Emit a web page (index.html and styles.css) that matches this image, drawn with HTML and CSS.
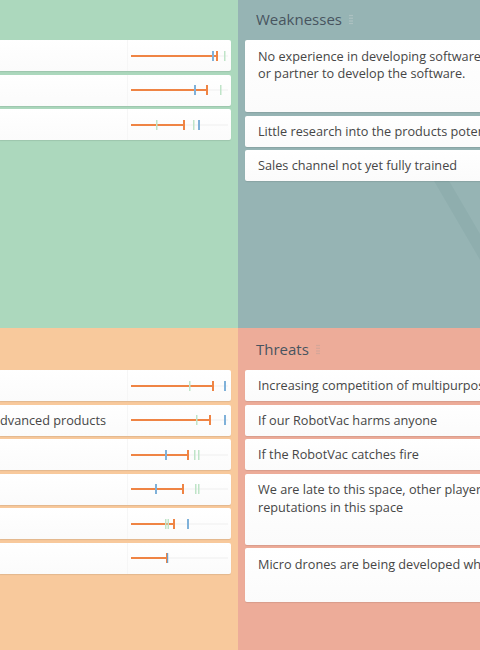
FILE: index.html
```html
<!DOCTYPE html>
<html>
<head>
<meta charset="utf-8">
<link rel="stylesheet" href="styles.css">
</head>
<body>
<div class="board">
  <section class="quad strengths">
    <div class="head"></div>
    <div class="list">
      <div class="card lcard"><div class="txt"></div><div class="bar"><svg width="97" height="14" viewBox="0 0 97 14"><line class="base" x1="0" y1="7" x2="97" y2="7"/><line class="val" x1="0" y1="7" x2="86" y2="7"/><rect class="tb" x="81" y="2" width="2" height="10"/><rect class="tg" x="93" y="2" width="1.5" height="10"/><rect class="to" x="85" y="2" width="2" height="10"/></svg></div></div>
      <div class="card lcard"><div class="txt"></div><div class="bar"><svg width="97" height="14" viewBox="0 0 97 14"><line class="base" x1="0" y1="7" x2="97" y2="7"/><line class="val" x1="0" y1="7" x2="76" y2="7"/><rect class="tb" x="63" y="2" width="2" height="10"/><rect class="tg" x="89" y="2" width="1.5" height="10"/><rect class="to" x="75" y="2" width="2" height="10"/></svg></div></div>
      <div class="card lcard"><div class="txt"></div><div class="bar"><svg width="97" height="14" viewBox="0 0 97 14"><line class="base" x1="0" y1="7" x2="97" y2="7"/><line class="val" x1="0" y1="7" x2="53" y2="7"/><rect class="tg" x="25" y="2" width="1.5" height="10"/><rect class="tg" x="62" y="2" width="1.5" height="10"/><rect class="tb" x="67" y="2" width="2" height="10"/><rect class="to" x="52" y="2" width="2" height="10"/></svg></div></div>
    </div>
  </section>

  <section class="quad weaknesses">
    <svg class="mark" width="320" height="340" viewBox="0 0 320 340"><polygon points="178,152 193,152 298,332 283,332"/></svg>
    <div class="head"><h2>Weaknesses</h2><svg class="grip" width="4" height="11" viewBox="0 0 4 11"><circle cx="1" cy="1.5" r=".75"/><circle cx="3" cy="1.5" r=".75"/><circle cx="1" cy="4.2" r=".75"/><circle cx="3" cy="4.2" r=".75"/><circle cx="1" cy="6.9" r=".75"/><circle cx="3" cy="6.9" r=".75"/><circle cx="1" cy="9.6" r=".75"/><circle cx="3" cy="9.6" r=".75"/></svg></div>
    <div class="list">
      <div class="card rcard tall">No experience in developing software, will need to hire<br>or partner to develop the software.</div>
      <div class="card rcard">Little research into the products potential market</div>
      <div class="card rcard">Sales channel not yet fully trained</div>
    </div>
  </section>

  <section class="quad opportunities">
    <div class="head"></div>
    <div class="list">
      <div class="card lcard"><div class="txt"></div><div class="bar"><svg width="97" height="14" viewBox="0 0 97 14"><line class="base" x1="0" y1="7" x2="97" y2="7"/><line class="val" x1="0" y1="7" x2="82" y2="7"/><rect class="tg" x="58" y="2" width="1.5" height="10"/><rect class="tb" x="93" y="2" width="2" height="10"/><rect class="to" x="81" y="2" width="2" height="10"/></svg></div></div>
      <div class="card lcard"><div class="txt"><span>Consumers are looking for more advanced products</span></div><div class="bar"><svg width="97" height="14" viewBox="0 0 97 14"><line class="base" x1="0" y1="7" x2="97" y2="7"/><line class="val" x1="0" y1="7" x2="79" y2="7"/><rect class="tg" x="65" y="2" width="1.5" height="10"/><rect class="tb" x="93" y="2" width="2" height="10"/><rect class="to" x="78" y="2" width="2" height="10"/></svg></div></div>
      <div class="card lcard"><div class="txt"></div><div class="bar"><svg width="97" height="14" viewBox="0 0 97 14"><line class="base" x1="0" y1="7" x2="97" y2="7"/><line class="val" x1="0" y1="7" x2="57" y2="7"/><rect class="tb" x="34" y="2" width="2" height="10"/><rect class="tg" x="63" y="2" width="1.5" height="10"/><rect class="tg" x="67" y="2" width="1.5" height="10"/><rect class="to" x="56" y="2" width="2" height="10"/></svg></div></div>
      <div class="card lcard"><div class="txt"></div><div class="bar"><svg width="97" height="14" viewBox="0 0 97 14"><line class="base" x1="0" y1="7" x2="97" y2="7"/><line class="val" x1="0" y1="7" x2="52" y2="7"/><rect class="tb" x="24" y="2" width="2" height="10"/><rect class="tg" x="64" y="2" width="1.5" height="10"/><rect class="tg" x="67" y="2" width="1.5" height="10"/><rect class="to" x="51" y="2" width="2" height="10"/></svg></div></div>
      <div class="card lcard"><div class="txt"></div><div class="bar"><svg width="97" height="14" viewBox="0 0 97 14"><line class="base" x1="0" y1="7" x2="97" y2="7"/><line class="val" x1="0" y1="7" x2="43" y2="7"/><rect class="tg" x="34" y="2" width="1.5" height="10"/><rect class="tg" x="36.5" y="2" width="1.5" height="10"/><rect class="tb" x="56" y="2" width="2" height="10"/><rect class="to" x="42" y="2" width="2" height="10"/></svg></div></div>
      <div class="card lcard"><div class="txt"></div><div class="bar"><svg width="97" height="14" viewBox="0 0 97 14"><line class="base" x1="0" y1="7" x2="97" y2="7"/><line class="val" x1="0" y1="7" x2="36" y2="7"/><rect class="to" x="35" y="2" width="2" height="10"/><rect class="tb2" x="36" y="2" width="1.2" height="10"/></svg></div></div>
    </div>
  </section>

  <section class="quad threats">
    <div class="head"><h2>Threats</h2><svg class="grip" width="4" height="11" viewBox="0 0 4 11"><circle cx="1" cy="1.5" r=".75"/><circle cx="3" cy="1.5" r=".75"/><circle cx="1" cy="4.2" r=".75"/><circle cx="3" cy="4.2" r=".75"/><circle cx="1" cy="6.9" r=".75"/><circle cx="3" cy="6.9" r=".75"/><circle cx="1" cy="9.6" r=".75"/><circle cx="3" cy="9.6" r=".75"/></svg></div>
    <div class="list">
      <div class="card rcard">Increasing competition of multipurpose robots</div>
      <div class="card rcard">If our RobotVac harms anyone</div>
      <div class="card rcard">If the RobotVac catches fire</div>
      <div class="card rcard tall2">We are late to this space, other players have established<br>reputations in this space</div>
      <div class="card rcard mid">Micro drones are being developed which could replace us</div>
    </div>
  </section>
</div>
</body>
</html>
```
FILE: styles.css
```css
html, body {
  margin: 0;
  padding: 0;
  width: 480px;
  height: 650px;
  overflow: hidden;
}
body {
  font-family: "Open Sans", "Noto Sans", sans-serif;
  color: #464646;
}
.board {
  display: grid;
  grid-template-columns: 238px 1fr;
  grid-template-rows: 330px 322px;
  margin-top: -2px;
  width: 480px;
}
.quad {
  position: relative;
  overflow: hidden;
}
.strengths { background: #acd8bd; }
.weaknesses { background: #96b4b4; }
.opportunities { background: #f8c99c; }
.threats { background: #edac99; }

.head {
  height: 42px;
  display: flex;
  align-items: center;
  gap: 7px;
  padding-left: 18px;
  position: relative;
  z-index: 1;
}
.head h2 {
  margin: 0;
  font-size: 15px;
  font-weight: 400;
  line-height: 20px;
  color: #48545f;
}
.grip { fill: #b9c9c9; margin-top: 1px; }
.threats .grip { fill: #c9a398; }

.list {
  display: flex;
  flex-direction: column;
  gap: 3.5px;
  position: relative;
  z-index: 1;
}
.strengths .list, .opportunities .list { padding-right: 7px; }
.weaknesses .list, .threats .list { padding-left: 7px; }

.card {
  background: linear-gradient(#ffffff, #fbfbfb);
  box-shadow: 0 1px 1px rgba(0, 0, 0, 0.09);
  font-size: 12.7px;
  line-height: 17px;
  box-sizing: border-box;
  white-space: nowrap;
}
.lcard {
  height: 31px;
  display: flex;
  border-radius: 0 2px 2px 0;
}
.lcard .txt {
  width: 127px;
  flex: none;
  display: flex;
  justify-content: flex-end;
  align-items: center;
  overflow: hidden;
  padding-right: 21px;
  box-sizing: border-box;
}
.lcard .txt span { flex: none; }
.lcard .bar {
  width: 104px;
  flex: none;
  box-sizing: border-box;
  border-left: 1px solid #f6f6f6;
  padding: 0 3px;
  display: flex;
  align-items: center;
}
.bar svg { display: block; }
.base { stroke: #efefef; stroke-width: 1; }
.val { stroke: #ef8444; stroke-width: 2; }
.to { fill: #ef8444; }
.tb { fill: #7fb1d9; }
.tb2 { fill: #6f9fc9; }
.tg { fill: #bfe4c8; }

.rcard {
  width: 420px;
  height: 31px;
  padding: 7px 13px 0;
  border-radius: 2px 0 0 2px;
}
.rcard.tall { height: 72px; padding-top: 8px; }
.rcard.tall2 { height: 71px; padding-top: 7.5px; line-height: 17.5px; }
.rcard.mid { height: 54px; padding-top: 7.5px; }

.mark {
  position: absolute;
  left: 0;
  top: 0;
  z-index: 0;
  fill: rgba(40, 80, 80, 0.06);
}
```
